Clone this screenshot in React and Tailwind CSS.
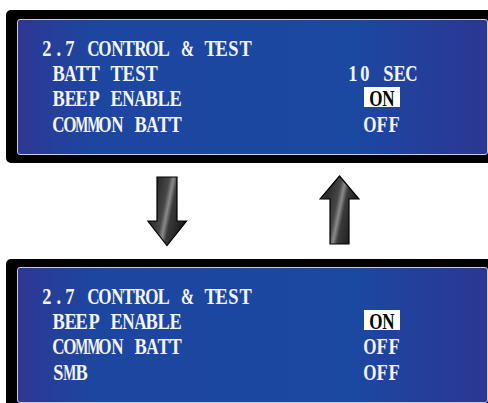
import React from 'react';

const CELL = 'inline-flex justify-center w-[11.7px]';

// wide glyphs get squeezed harder so they stay inside their cell
const squeeze = (ch) => {
  if (ch === 'M' || ch === 'W') return 'inline-block scale-x-[0.6]';
  if (ch === '&') return 'inline-block scale-x-[0.68]';
  if (ch === 'O' || ch === 'C' || ch === 'N' || ch === 'A' || ch === 'R') return 'inline-block scale-x-[0.74]';
  return 'inline-block scale-x-[0.8]';
};

// fixed-cell text, imitates the LCD's condensed monospace serif
const Mono = ({ text }) => (
  <>
    {text.split('').map((ch, i) => (
      <span key={i} className={CELL}>
        <span className={squeeze(ch)}>{ch === ' ' ? '\u00a0' : ch}</span>
      </span>
    ))}
  </>
);

const Row = ({ label, value, mode }) => (
  <div className="flex h-[25.2px]">
    <span className="w-[306px] pl-[11.7px]">
      <Mono text={label} />
    </span>
    {mode === 'box' ? (
      <span className="ml-[17px] mt-[1px] flex h-[20px] w-[36px] justify-center bg-white leading-[23px] text-black">
        <Mono text={value} />
      </span>
    ) : mode === 'center' ? (
      <span className="ml-[17px] flex w-[36px] justify-center">
        <Mono text={value} />
      </span>
    ) : (
      <span>
        <Mono text={value} />
      </span>
    )}
  </div>
);

const Panel = ({ rows, pt }) => (
  <div className={`w-[520px] rounded-[5px] bg-black pl-[11px] pb-[8px] ${pt}`}>
    <div className="w-[471px] h-[136px] rounded-[3px] border border-[#c5cbe0] bg-[linear-gradient(90deg,#2d3894_0%,#1d46a0_16%,#1b48a1_72%,#2c3693_100%)] pl-[23px] pt-[16px] font-['Liberation_Serif',serif] text-[23px] font-bold leading-[25.2px] text-[#f4f4f4]">
      <div className="h-[25.2px]">
        <Mono text="2.7 CONTROL & TEST" />
      </div>
      {rows.map((r) => (
        <Row key={r.label} {...r} />
      ))}
    </div>
  </div>
);

const Arrow = ({ id, up }) => (
  <svg width="41" height="71" viewBox="0 0 41 71">
    <defs>
      <linearGradient id={id} x1="0" y1="0" x2="1" y2="0.35">
        <stop offset="0" stopColor="#5a5a5a" />
        <stop offset="0.25" stopColor="#2b2b2b" />
        <stop offset="0.5" stopColor="#474747" />
        <stop offset="0.6" stopColor="#8a8a8a" />
        <stop offset="0.7" stopColor="#3a3a3a" />
        <stop offset="1" stopColor="#1c1c1c" />
      </linearGradient>
    </defs>
    <path
      d={up ? 'M20.5 1 L40 24 H30 V69 H11 V24 H1 Z' : 'M10 1 H30 V45 H39.5 L20 69.5 L0.8 45 H10 Z'}
      fill={`url(#${id})`}
      stroke="#000"
      strokeWidth="1.2"
      strokeLinejoin="miter"
    />
  </svg>
);

export default function App() {
  return (
    <div className="w-[488px] h-[403px] overflow-hidden bg-white pt-[10px] pl-[6px]">
      <Panel
        pt="pt-[9px]"
        rows={[
          { label: 'BATT TEST', value: '10 SEC' },
          { label: 'BEEP ENABLE', value: 'ON', mode: 'box' },
          { label: 'COMMON BATT', value: 'OFF', mode: 'center' },
        ]}
      />
      <div className="flex h-[96px] items-start pt-[13px]">
        <div className="ml-[141px]">
          <Arrow id="down" />
        </div>
        <div className="ml-[131px] -mt-[1px]">
          <Arrow id="up" up />
        </div>
      </div>
      <Panel
        pt="pt-[8px]"
        rows={[
          { label: 'BEEP ENABLE', value: 'ON', mode: 'box' },
          { label: 'COMMON BATT', value: 'OFF', mode: 'center' },
          { label: 'SMB', value: 'OFF', mode: 'center' },
        ]}
      />
    </div>
  );
}
